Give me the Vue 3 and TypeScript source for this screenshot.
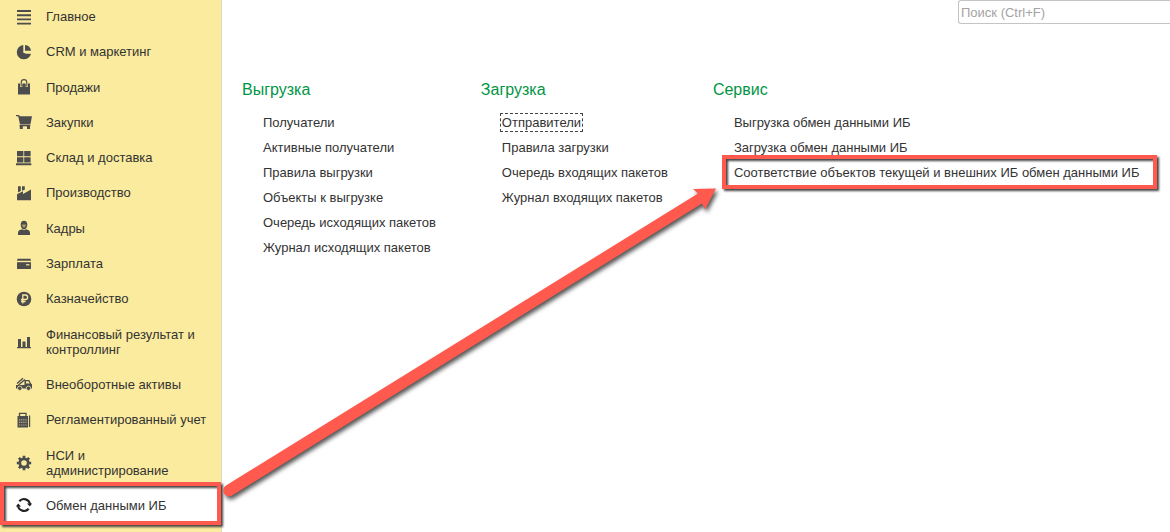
<script setup lang="ts">
interface MenuItem {
  label: string
  icon: string
  active?: boolean
}

interface Section {
  title: string
  links: string[]
}

const menu: MenuItem[] = [
  { label: 'Главное', icon: 'lines' },
  { label: 'CRM и маркетинг', icon: 'pie' },
  { label: 'Продажи', icon: 'bag' },
  { label: 'Закупки', icon: 'cart' },
  { label: 'Склад и доставка', icon: 'boxes' },
  { label: 'Производство', icon: 'factory' },
  { label: 'Кадры', icon: 'person' },
  { label: 'Зарплата', icon: 'card' },
  { label: 'Казначейство', icon: 'ruble' },
  { label: 'Финансовый результат и контроллинг', icon: 'bars' },
  { label: 'Внеоборотные активы', icon: 'truck' },
  { label: 'Регламентированный учет', icon: 'calc' },
  { label: 'НСИ и администрирование', icon: 'gear' },
  { label: 'Обмен данными ИБ', icon: 'sync', active: true },
]

const focusedLink = 'Отправители'
const markedLink = 'Соответствие объектов текущей и внешних ИБ обмен данными ИБ'

const sections: Section[] = [
  {
    title: 'Выгрузка',
    links: [
      'Получатели',
      'Активные получатели',
      'Правила выгрузки',
      'Объекты к выгрузке',
      'Очередь исходящих пакетов',
      'Журнал исходящих пакетов',
    ],
  },
  {
    title: 'Загрузка',
    links: [focusedLink, 'Правила загрузки', 'Очередь входящих пакетов', 'Журнал входящих пакетов'],
  },
  {
    title: 'Сервис',
    links: ['Выгрузка обмен данными ИБ', 'Загрузка обмен данными ИБ', markedLink],
  },
]
</script>

<template>
  <div class="app">
    <nav class="sidebar" aria-label="Разделы">
      <a
        v-for="item in menu"
        :key="item.icon"
        href="#"
        class="item"
        :class="{ active: item.active }"
      >
        <svg class="icon" viewBox="0 0 16 16" aria-hidden="true">
          <path
            v-if="item.icon === 'lines'"
            d="M1 2h14M1 6.200h14M1 10.400h14M1 14.600h14"
            stroke="currentColor"
            stroke-width="1.900"
          />
          <g v-else-if="item.icon === 'pie'">
            <path d="M7.300 1v7.800l3 .9H15A7.200 7.200 0 1 1 7.300 1z" />
            <path d="M9 1a6.600 6.600 0 0 1 6 5.800H9z" />
          </g>
          <g v-else-if="item.icon === 'bag'">
            <path d="M2 4.500h12V15.500H2z" />
            <path d="M5.200 8V3.500a2.800 3 0 0 1 5.600 0V8" fill="none" stroke="#fbeb9e" stroke-width="2.200" />
            <path d="M5.200 7.500V3.500a2.800 2.900 0 0 1 5.600 0V7.500" fill="none" stroke="currentColor" stroke-width="1.100" />
          </g>
          <g v-else-if="item.icon === 'cart'">
            <path d="M0 1h3l.9 1.200H16l-1.600 8.300H4L2.200 2.300H0z" />
            <path d="M3.500 11h10.800v1.300H3.500z" />
            <path d="M3.800 12h3v3h-3zM11 12h3v3h-3z" />
          </g>
          <path
            v-else-if="item.icon === 'boxes'"
            d="M1 1h6.400v5.300H1zM8.200 1H14.600v5.300H8.200zM1 7.200h6.400v5.200H1zM8.200 7.200H14.600v5.200H8.200zM0 13.300h15.300v1.900H0z"
          />
          <path
            v-else-if="item.icon === 'factory'"
            d="M1 15.200V9.200L7 6.300v2.600L15 4.500v10.700zM2 1.200h2.800v4.800L2 7.400zM6 1.200h2.800v3.600L6 5.800z"
          />
          <g v-else-if="item.icon === 'person'">
            <path d="M4.700 4.600a3.300 3.800 0 0 1 6.600 0c0 2.600-1.300 5-3.300 5S4.700 7.200 4.700 4.600z" />
            <path d="M2 15v-2.500c0-1.900 2-2.700 4-3.200l2 1 2-1c2 .5 4 1.300 4 3.200V15z" />
            <path d="M6 4.600h4c0 1.800-.9 3-2 3s-2-1.200-2-3z" fill="#a59b70" />
          </g>
          <g v-else-if="item.icon === 'card'">
            <path d="M1.500 2.800h13l.5 2H1z" />
            <path d="M1 6.200h14V13H1z" />
            <path d="M10 8.800h3.500" stroke="#fbeb9e" stroke-width="1.200" />
          </g>
          <g v-else-if="item.icon === 'ruble'">
            <circle cx="8" cy="8" r="7.300" />
            <path
              d="M6.800 12.500V4h2.600a2.200 2.200 0 0 1 0 4.500H5M5 10.500h4.500"
              fill="none"
              stroke="#fbeb9e"
              stroke-width="1.300"
            />
          </g>
          <path
            v-else-if="item.icon === 'bars'"
            d="M1 13h14v1.300H1zM2 5h3v8.500H2zM6.500 7.500h3v6h-3zM11 3h3v10.500h-3z"
          />
          <g v-else-if="item.icon === 'truck'">
            <path d="M1 7.500L7 2.300M2.500 9L9 3.500" stroke="currentColor" stroke-width="1.400" />
            <path d="M0 9h8.500V4h4.800L15 7.500l1 .8V12.500H0z" />
            <path d="M10 5.200h2.500l1.200 2.300H10z" fill="#fbeb9e" />
            <circle cx="3.800" cy="12.300" r="2.200" stroke="#fbeb9e" stroke-width=".8" />
            <circle cx="12.500" cy="12.300" r="2.200" stroke="#fbeb9e" stroke-width=".8" />
          </g>
          <g v-else-if="item.icon === 'calc'">
            <path d="M3.500 4.500V1.400h6.500v3.100" fill="none" stroke="currentColor" stroke-width="1.300" />
            <path d="M1.500 4h10.500v11.500H1.500zM12.900 3.500h1.300v11.500h-1.300z" />
            <path
              d="M3 7.800h7.800M3 10.400h7.800M3 13h7.800"
              stroke="#fbeb9e"
              stroke-opacity=".6"
              stroke-width="1.200"
              stroke-dasharray="1.300 .8"
            />
          </g>
          <g v-else-if="item.icon === 'gear'">
            <circle cx="8" cy="8" r="4.200" fill="none" stroke="currentColor" stroke-width="2.800" />
            <path
              d="M8 .8v2.500M8 12.700v2.500M.8 8h2.500M12.700 8h2.500M2.900 2.900l1.800 1.800M11.300 11.300l1.800 1.800M2.900 13.100l1.800-1.800M11.300 4.700l1.800-1.800"
              stroke="currentColor"
              stroke-width="2.700"
            />
          </g>
          <g v-else>
            <path
              d="M3.300 4.200a6.100 6.100 0 0 1 10.700 3.300M12.700 11.800a6.100 6.100 0 0 1-10.700-3.300"
              fill="none"
              stroke="currentColor"
              stroke-width="2.200"
            />
            <path d="M11 6.500h5.200L13.800 9.500zM5 9.500H-.2L2.200 6.500z" />
          </g>
        </svg>
        <span class="label">{{ item.label }}</span>
      </a>
    </nav>

    <main class="content">
      <input class="search" type="search" placeholder="Поиск (Ctrl+F)" aria-label="Поиск" />
      <div class="sections">
        <section v-for="section in sections" :key="section.title" class="section">
          <h2>{{ section.title }}</h2>
          <ul>
            <li v-for="link in section.links" :key="link">
              <a
                href="#"
                :class="{ focused: link === focusedLink, marked: link === markedLink }"
              >{{ link }}</a>
            </li>
          </ul>
        </section>
      </div>
    </main>

    <svg class="arrow" viewBox="0 0 1170 532" aria-hidden="true">
      <path
        d="M226 485.500L698 193.500L693 189L716 188.500L705 209.500L702 203.500L232 495.500A5.500 5.500 0 0 1 226 485.500z"
        fill="#ff5a4d"
      />
    </svg>
  </div>
</template>

<style>
body {
  margin: 0;
  background: #fff;
}
</style>

<style scoped>
.app {
  position: relative;
  display: flex;
  min-height: 100vh;
  overflow: hidden;
  font-family: "Liberation Sans", Arial, sans-serif;
  font-size: 13px;
  color: #333;
}

.sidebar {
  box-sizing: border-box;
  flex: 0 0 222px;
  display: flex;
  flex-direction: column;
  justify-content: space-between;
  padding: 9px 0 19px;
  background: #fbeb9e;
  border-right: 1px solid #ddd8c4;
}

.item {
  position: relative;
  display: flex;
  align-items: center;
  gap: 14px;
  padding: 0 12px 0 16px;
  color: #333;
  line-height: 15px;
  text-decoration: none;
}

.icon {
  position: relative;
  flex: none;
  width: 16px;
  height: 16px;
  margin: -1px 0;
  overflow: visible;
  color: #4d4d4d;
  fill: currentColor;
}

.label {
  position: relative;
}

.active .icon {
  color: #222;
}

.active::before {
  content: "";
  position: absolute;
  inset: -13px 1px -9px 0;
  background: #fff;
}

.active::after,
.marked::after {
  content: "";
  position: absolute;
  border: 4px solid #ff5a4d;
  filter: drop-shadow(2px 2px 1px #444);
}

.active::after {
  inset: -16px 0 -12px;
}

.content {
  flex: 1;
  min-width: 0;
  display: flex;
  flex-direction: column;
}

.search {
  box-sizing: border-box;
  align-self: flex-end;
  width: 212px;
  height: 24px;
  padding: 0 2px;
  border: 1px solid #c4c4c4;
  border-right: 0;
  border-radius: 3px 0 0 3px;
  background: #fff;
  font: inherit;
  appearance: none;
}

.search::placeholder {
  color: #a3a3a3;
  opacity: 1;
}

.sections {
  display: flex;
  gap: 45px;
  padding: 56px 12px 20px 20px;
  white-space: nowrap;
}

h2 {
  margin: 0;
  color: #009646;
  font-size: 16px;
  font-weight: 400;
  line-height: 20px;
}

ul {
  margin: 10px 0 0;
  padding: 0 0 0 21px;
  list-style: none;
}

li {
  line-height: 25px;
}

li a {
  position: relative;
  color: #333;
  text-decoration: none;
}

.focused {
  outline: 1px dashed #444;
  outline-offset: 1px;
}

.marked::after {
  inset: -10px -18px -9px -12px;
}

.arrow {
  position: absolute;
  top: 0;
  left: 0;
  width: 1170px;
  pointer-events: none;
  filter: drop-shadow(2px 3px 2px #555);
}
</style>
